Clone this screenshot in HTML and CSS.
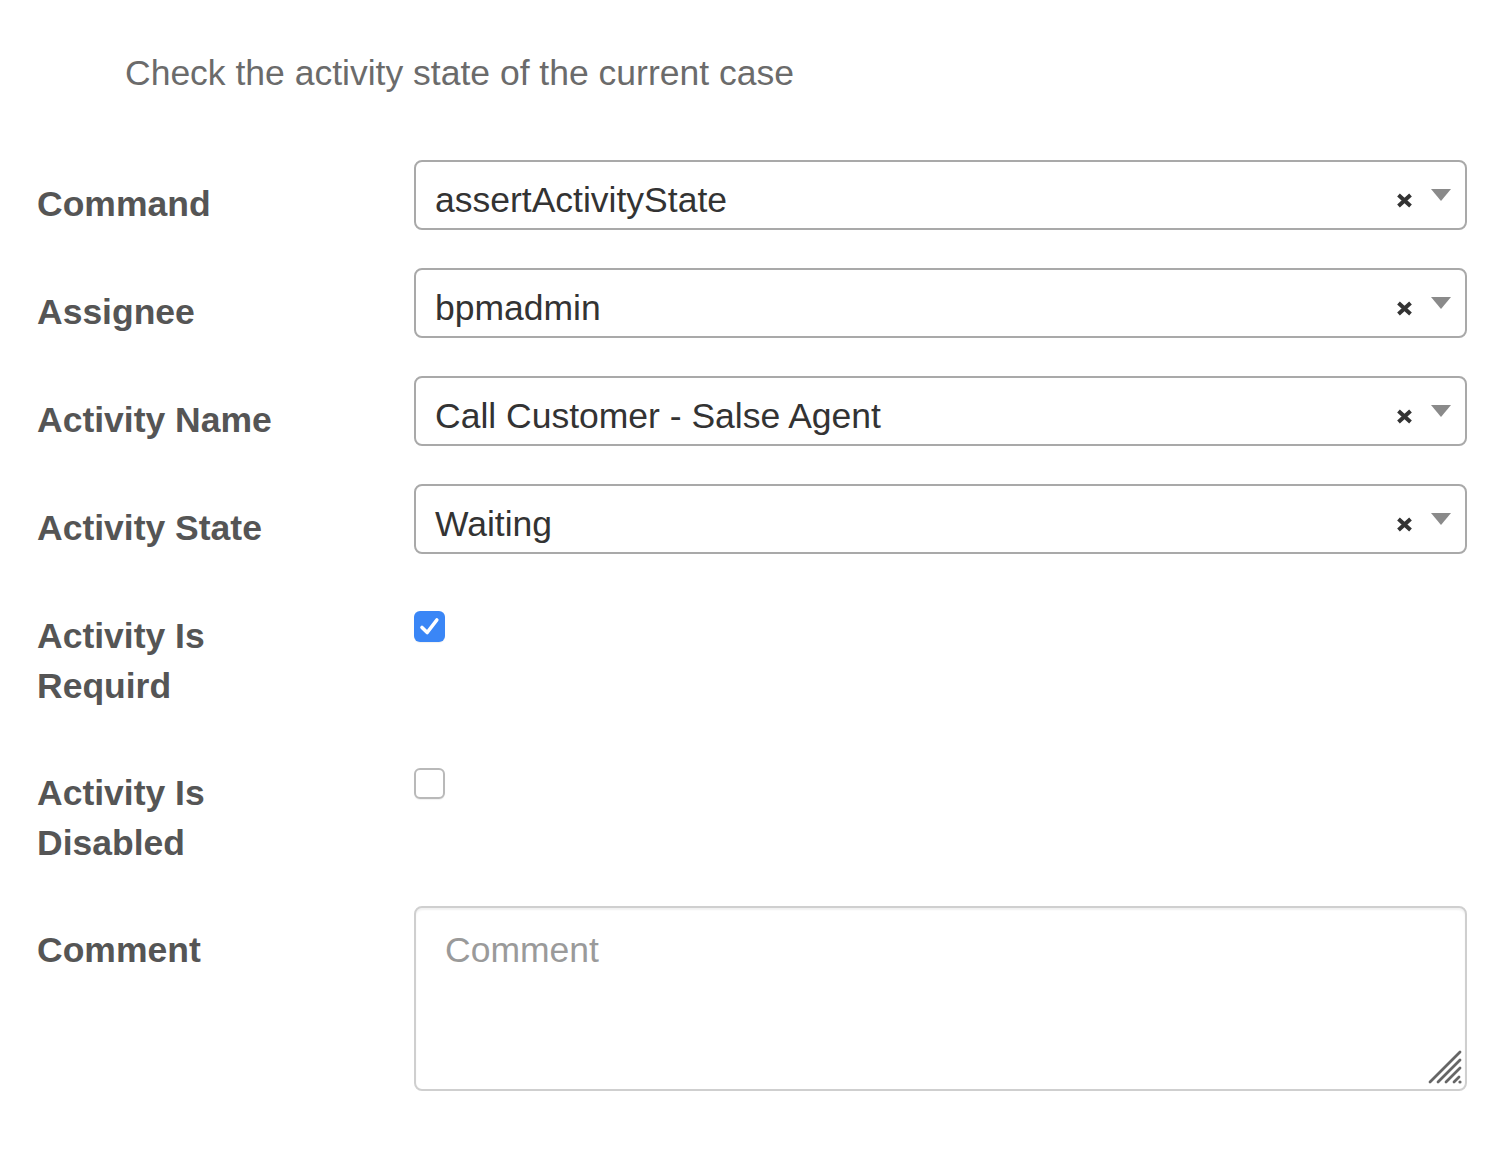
FILE: index.html
```html
<!DOCTYPE html>
<html lang="en">
<head>
<meta charset="utf-8">
<title>Assert Activity State</title>
<link rel="stylesheet" href="styles.css">
</head>
<body>
<div class="page">
  <p class="intro">Check the activity state of the current case</p>
  <div class="form">
    <div class="row">
      <label class="label">Command</label>
      <div class="select">
        <span class="value">assertActivityState</span>
        <svg class="clear" width="17" height="15" viewBox="0 0 17 15"><path d="M2.5 2 L14.5 13 M14.5 2 L2.5 13" stroke="#333" stroke-width="4"/></svg>
        <span class="arrow"></span>
      </div>
    </div>
    <div class="row">
      <label class="label">Assignee</label>
      <div class="select">
        <span class="value">bpmadmin</span>
        <svg class="clear" width="17" height="15" viewBox="0 0 17 15"><path d="M2.5 2 L14.5 13 M14.5 2 L2.5 13" stroke="#333" stroke-width="4"/></svg>
        <span class="arrow"></span>
      </div>
    </div>
    <div class="row">
      <label class="label">Activity Name</label>
      <div class="select">
        <span class="value">Call Customer - Salse Agent</span>
        <svg class="clear" width="17" height="15" viewBox="0 0 17 15"><path d="M2.5 2 L14.5 13 M14.5 2 L2.5 13" stroke="#333" stroke-width="4"/></svg>
        <span class="arrow"></span>
      </div>
    </div>
    <div class="row">
      <label class="label">Activity State</label>
      <div class="select">
        <span class="value">Waiting</span>
        <svg class="clear" width="17" height="15" viewBox="0 0 17 15"><path d="M2.5 2 L14.5 13 M14.5 2 L2.5 13" stroke="#333" stroke-width="4"/></svg>
        <span class="arrow"></span>
      </div>
    </div>
    <div class="row">
      <label class="label">Activity Is<br>Requird</label>
      <div class="control">
        <span class="checkbox checked">
          <svg width="31" height="31" viewBox="0 0 31 31"><path d="M8 16.5 L13.2 21.5 L22.8 9" fill="none" stroke="#fff" stroke-width="3.6" stroke-linecap="round" stroke-linejoin="round"/></svg>
        </span>
      </div>
    </div>
    <div class="row">
      <label class="label">Activity Is<br>Disabled</label>
      <div class="control">
        <span class="checkbox"></span>
      </div>
    </div>
    <div class="row">
      <label class="label">Comment</label>
      <div class="textarea-wrap">
        <textarea class="textarea" placeholder="Comment"></textarea>
        <svg class="grip" width="36" height="36" viewBox="0 0 36 36"><g stroke="#666" stroke-width="2.8" stroke-linecap="round"><path d="M3 33 L33 3"/><path d="M11 33 L33 11"/><path d="M19 33 L33 19"/><path d="M27 33 L32 28"/></g><circle cx="33" cy="33" r="1.6" fill="#666"/></svg>
      </div>
    </div>
  </div>
</div>
</body>
</html>
```

FILE: styles.css
```css
html, body {
  margin: 0;
  padding: 0;
  background: #fff;
}

body {
  font-family: "Liberation Sans", Arial, Helvetica, sans-serif;
  font-size: 35.5px;
}

.page {
  padding: 0 29px 0 37px;
}

.intro {
  margin: 53px 0 0 88px;
  color: #6b6b6b;
  line-height: normal;
  height: 107px;
}

.form {
  display: flex;
  flex-direction: column;
  gap: 38px;
}

.row {
  display: grid;
  grid-template-columns: 280px 1fr;
  column-gap: 97px;
  align-items: start;
}

.label {
  padding-top: 19px;
  line-height: 50px;
  font-weight: bold;
  color: #555;
}

.select {
  box-sizing: border-box;
  height: 70px;
  border: 2px solid #a9a9a9;
  border-radius: 8px;
  display: flex;
  align-items: flex-start;
  padding: 0 14px 0 19px;
  background: #fff;
}

.value {
  flex: 1;
  margin-top: 18px;
  color: #333;
  line-height: normal;
  white-space: nowrap;
}

.clear {
  margin-top: 31px;
  flex: none;
}

.arrow {
  flex: none;
  margin: 27px 0 0 18px;
  width: 0;
  height: 0;
  border-left: 10px solid transparent;
  border-right: 10px solid transparent;
  border-top: 12px solid #8a8a8a;
}

.control {
  padding-top: 19px;
}

.checkbox {
  display: block;
  box-sizing: border-box;
  width: 31px;
  height: 31px;
  border: 2px solid #b9b9b9;
  border-radius: 6px;
  background: #fff;
  box-shadow: 0 1px 1px rgba(0, 0, 0, 0.06);
}

.checkbox.checked {
  border: none;
  background: #3a86f6;
}

.checkbox.checked svg {
  display: block;
}

.textarea-wrap {
  position: relative;
  height: 185px;
}

.textarea {
  display: block;
  box-sizing: border-box;
  width: 100%;
  height: 185px;
  margin: 0;
  padding: 22px 29px;
  border: 2px solid #cfcfcf;
  border-radius: 8px;
  box-shadow: inset 0 2px 2px rgba(0, 0, 0, 0.06);
  font-family: "Liberation Sans", Arial, Helvetica, sans-serif;
  font-size: 35.5px;
  line-height: normal;
  color: #333;
  resize: none;
  outline: none;
}

.textarea::placeholder {
  color: #9a9a9a;
}

.grip {
  position: absolute;
  right: 4px;
  bottom: 6px;
}
```
